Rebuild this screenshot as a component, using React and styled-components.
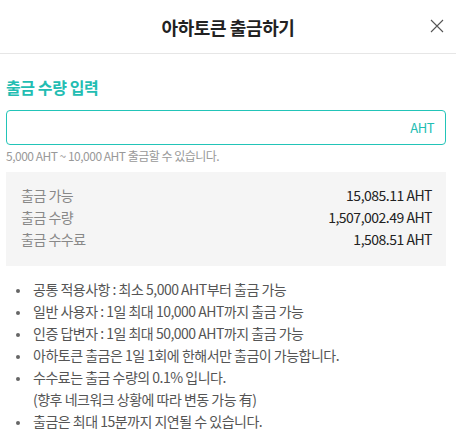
import React from "react";
import styled, { createGlobalStyle } from "styled-components";

const GlobalStyle = createGlobalStyle`
  body {
    margin: 0;
    background: #fff;
    font-family: "Noto Sans CJK KR", "Noto Sans", sans-serif;
  }
`;

const Modal = styled.div`
  width: 456px;
  background: #fff;
`;

const Header = styled.header`
  position: relative;
  height: 53px;
  display: flex;
  align-items: center;
  justify-content: center;
  border-bottom: 1px solid #e6e6e6;
`;

const Title = styled.h1`
  margin: 0;
  font-size: 18px;
  font-weight: 700;
  color: #222;
  letter-spacing: -0.4px;
`;

const CloseButton = styled.button`
  position: absolute;
  right: 11px;
  top: 18px;
  width: 16px;
  height: 16px;
  padding: 0;
  border: 0;
  background: none;
  display: flex;
  align-items: center;
  justify-content: center;
`;

const Body = styled.div`
  padding: 22px 10px 0 6px;
`;

const SectionTitle = styled.h2`
  margin: 0 0 12px;
  font-size: 16px;
  font-weight: 700;
  color: #22bdb2;
  letter-spacing: -0.4px;
  line-height: 22px;
`;

const InputBox = styled.label`
  height: 35px;
  box-sizing: border-box;
  border: 1px solid #22c4b8;
  border-radius: 4px;
  display: flex;
  align-items: center;
  padding: 0 11px 0 10px;
`;

const AmountInput = styled.input`
  flex: 1;
  min-width: 0;
  border: 0;
  outline: none;
  background: transparent;
  font: inherit;
  font-size: 14px;
`;

const Unit = styled.span`
  font-size: 13px;
  color: #22bdb2;
  letter-spacing: -0.5px;
`;

const Hint = styled.p`
  margin: 3px 0 0;
  font-size: 12px;
  color: #999;
  letter-spacing: -0.5px;
  line-height: 16px;
`;

const SummaryBox = styled.div`
  margin-top: 8px;
  background: #f5f5f5;
  padding: 12px 14px 16px 15px;
  display: flex;
  flex-direction: column;
`;

const SummaryRow = styled.div`
  display: flex;
  justify-content: space-between;
  font-size: 14px;
  line-height: 22px;
  letter-spacing: -0.5px;
`;

const Label = styled.span`
  color: #888;
`;

const Value = styled.span`
  color: #222;
`;

const Notes = styled.ul`
  margin: 12px 0 0;
  padding: 0 0 0 25px;
  font-size: 14px;
  line-height: 22px;
  color: #555;
  letter-spacing: -0.5px;
`;

const Note = styled.li`
  padding-left: 2px;
  &::marker {
    color: #666;
    font-size: 11px;
  }
`;

const rows = [
  ["출금 가능", "15,085.11 AHT"],
  ["출금 수량", "1,507,002.49 AHT"],
  ["출금 수수료", "1,508.51 AHT"],
];

export default function App() {
  return (
    <>
      <GlobalStyle />
      <Modal>
        <Header>
          <Title>아하토큰 출금하기</Title>
          <CloseButton aria-label="닫기">
            <svg width="14" height="14" viewBox="0 0 14 14">
              <path d="M1 1L13 13M13 1L1 13" stroke="#555" strokeWidth="1.1" />
            </svg>
          </CloseButton>
        </Header>
        <Body>
          <SectionTitle>출금 수량 입력</SectionTitle>
          <InputBox>
            <AmountInput />
            <Unit>AHT</Unit>
          </InputBox>
          <Hint>5,000 AHT ~ 10,000 AHT 출금할 수 있습니다.</Hint>
          <SummaryBox>
            {rows.map(([l, v]) => (
              <SummaryRow key={l}>
                <Label>{l}</Label>
                <Value>{v}</Value>
              </SummaryRow>
            ))}
          </SummaryBox>
          <Notes>
            <Note>공통 적용사항 : 최소 5,000 AHT부터 출금 가능</Note>
            <Note>일반 사용자 : 1일 최대 10,000 AHT까지 출금 가능</Note>
            <Note>인증 답변자 : 1일 최대 50,000 AHT까지 출금 가능</Note>
            <Note>아하토큰 출금은 1일 1회에 한해서만 출금이 가능합니다.</Note>
            <Note>
              수수료는 출금 수량의 0.1% 입니다.
              <br />
              (향후 네크워크 상황에 따라 변동 가능 有)
            </Note>
            <Note>출금은 최대 15분까지 지연될 수 있습니다.</Note>
          </Notes>
        </Body>
      </Modal>
    </>
  );
}
